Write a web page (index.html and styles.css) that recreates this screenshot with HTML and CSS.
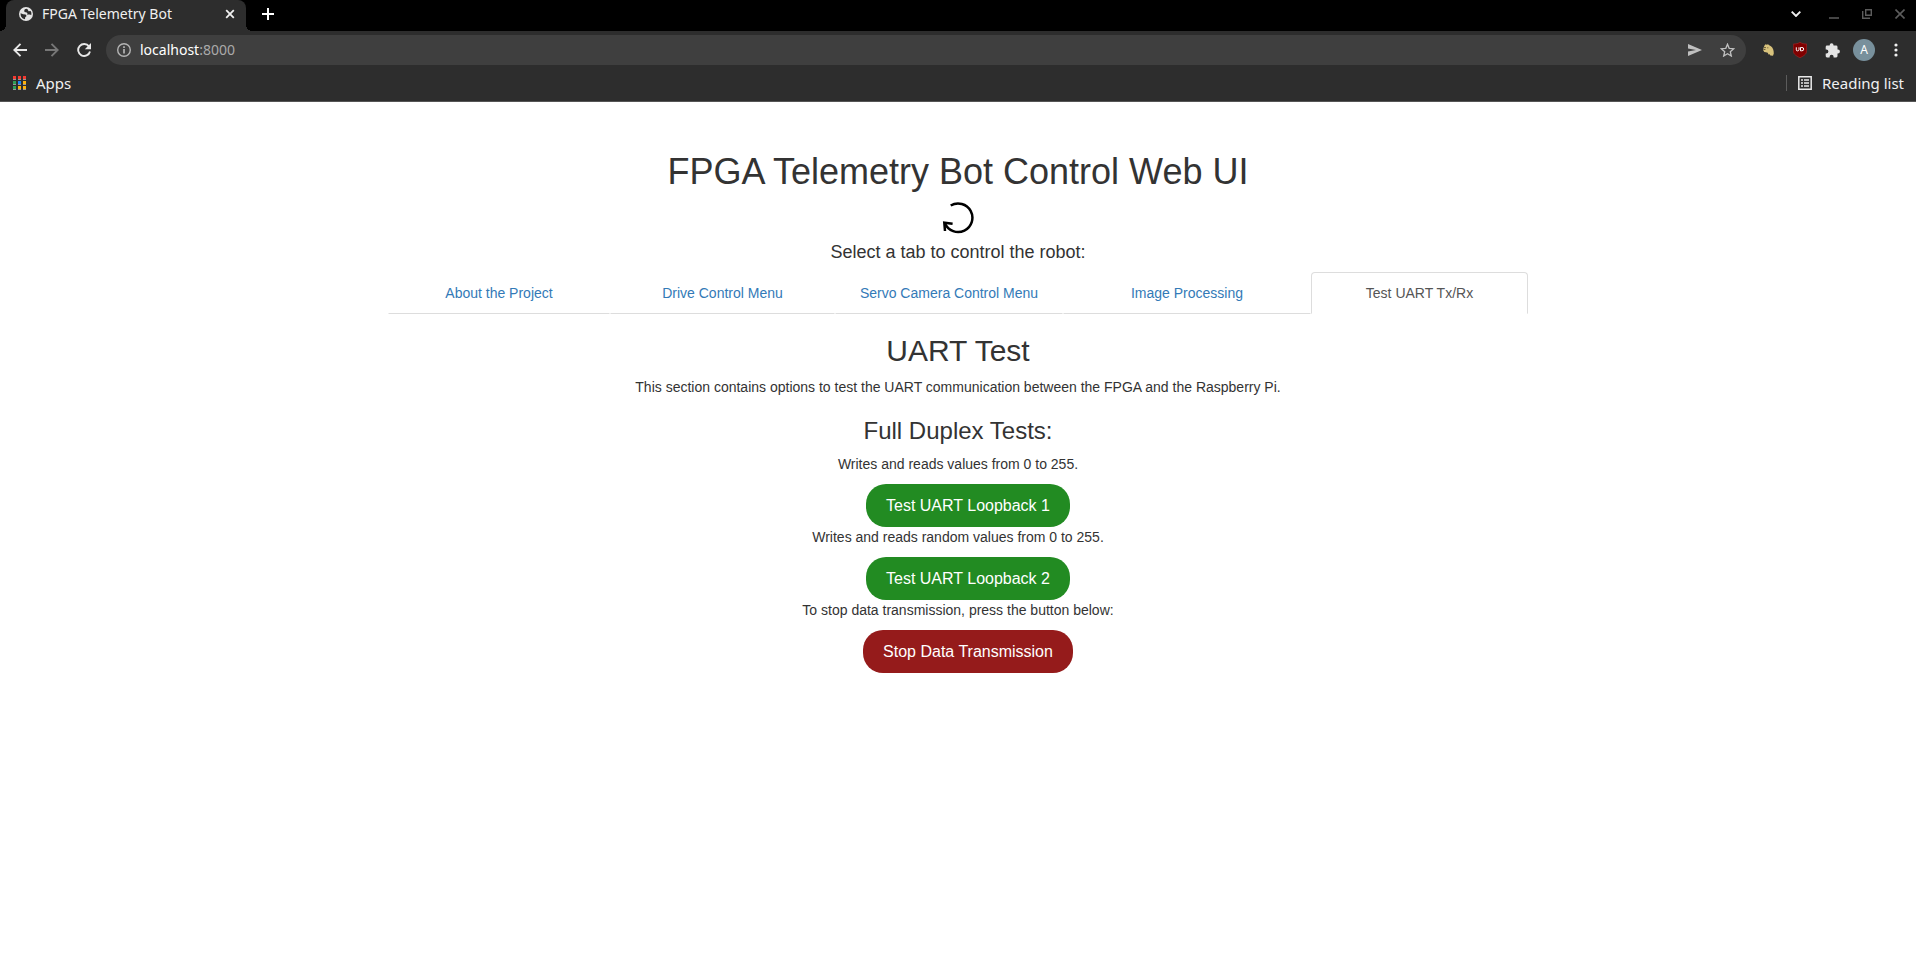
FILE: index.html
```html
<!DOCTYPE html>
<html lang="en">
<head>
<meta charset="utf-8">
<title>FPGA Telemetry Bot</title>
<link rel="stylesheet" href="styles.css">
</head>
<body>
<header class="browser">
  <div class="tabstrip">
    <div class="browser-tab">
      <svg width="14" height="14" viewBox="0 0 14 14" aria-hidden="true"><circle cx="7" cy="7" r="7" fill="#e4e4e4"/><path d="M7.600 1.800Q5.200 2 5.200 3.800T7.200 5.300L8.600 6.200 7.800 7.600H10.500L12.300 8Q12.900 5.500 11.600 4L9.500 4.300 8.800 2.600zM1.600 6.200L4.200 7.200 6.600 7.400 7.600 8.900 6.200 10.300 6 12.300Q3.500 12 2.200 9.800 1.400 8 1.600 6.200z" fill="#2d2d2d"/></svg>
      <span class="tab-title">FPGA Telemetry Bot</span>
      <button class="icon-btn" aria-label="Close tab"><svg width="10" height="10" viewBox="0 0 10 10"><path d="M1.200 1.200l7.600 7.600M8.800 1.200L1.200 8.800" stroke="#f0f0f0" stroke-width="1.800"/></svg></button>
    </div>
    <button class="icon-btn new-tab" aria-label="New tab"><svg width="12" height="12" viewBox="0 0 12 12"><path d="M6 0v12M0 6h12" stroke="#fff" stroke-width="2"/></svg></button>
    <div class="window-controls">
      <button class="icon-btn" aria-label="Search tabs"><svg width="10" height="6" viewBox="0 0 10 6"><path d="M.7.7L5 5 9.300.7" fill="none" stroke="#f0f0f0" stroke-width="1.900"/></svg></button>
      <button class="icon-btn" aria-label="Minimize"><svg width="10" height="10" viewBox="0 0 10 10"><path d="M0 9h10" stroke="#5c5c5c" stroke-width="1.500"/></svg></button>
      <button class="icon-btn" aria-label="Restore"><svg width="10" height="10" viewBox="0 0 10 10"><path d="M3.700.7h5.600v5.600H3.700zM.7 2v7.300H8" fill="none" stroke="#5c5c5c" stroke-width="1.400"/></svg></button>
      <button class="icon-btn" aria-label="Close"><svg width="10" height="10" viewBox="0 0 10 10"><path d="M.5.5l9 9M9.500.5l-9 9" stroke="#5c5c5c" stroke-width="1.600"/></svg></button>
    </div>
  </div>
  <div class="toolbar">
    <div class="nav-buttons">
      <button class="icon-btn" aria-label="Back"><svg width="14" height="14" viewBox="0 0 14 14"><path d="M14 7H1.500M7.500.8L1.300 7l6.200 6.200" fill="none" stroke="#e8e8e8" stroke-width="1.900"/></svg></button>
      <button class="icon-btn" aria-label="Forward"><svg width="14" height="14" viewBox="0 0 14 14"><path d="M0 7h12.500M6.500.8L12.700 7l-6.200 6.200" fill="none" stroke="#777" stroke-width="1.900"/></svg></button>
      <button class="icon-btn" aria-label="Reload"><svg width="14" height="14" viewBox="0 0 14 14"><path d="M12 3.400A6 6 0 1 0 13 8.500" fill="none" stroke="#e8e8e8" stroke-width="1.900"/><path d="M14 0v6.200H7.800z" fill="#e8e8e8"/></svg></button>
    </div>
    <div class="omnibox">
      <svg width="14" height="14" viewBox="0 0 14 14" aria-hidden="true"><circle cx="7" cy="7" r="6.300" fill="none" stroke="#b4b4b4" stroke-width="1.400"/><path d="M7 6v4.500M7 3.300V5" stroke="#b4b4b4" stroke-width="1.700"/></svg>
      <div class="url" role="textbox" aria-label="Address bar" contenteditable="true">localhost<span class="port">:8000</span></div>
      <button class="icon-btn" aria-label="Share"><svg width="14" height="12" viewBox="0 0 14 12"><path d="M0 0l14 6L0 12V7.500L8 6 0 4.500z" fill="#c0c0c0"/></svg></button>
      <button class="icon-btn" aria-label="Bookmark"><svg width="15" height="14" viewBox="0 0 15 14"><path d="M7.500 1.200l1.700 4.100 4.500.4-3.400 3 1 4.300-3.800-2.300L3.700 13l1-4.300-3.400-3 4.500-.4z" fill="none" stroke="#c0c0c0" stroke-width="1.300"/></svg></button>
    </div>
    <div class="extensions">
      <button class="icon-btn" aria-label="Extension"><svg width="11" height="12" viewBox="0 0 11 12"><path d="M1.500 1.500L2.500.3l1.300.5L5 .2l1.200 1C8.800 2 10.300 4.500 10.600 7l.2 2.500-.8 2.300-2.600-.2-.8-1.400-1.100.3-.8-1.700L2.900 8.200 1.300 8 .2 6.200.5 4z" fill="#d8c27c"/><path d="M1 3.600h2M.6 5.500h1.800M4.800 3.300v1" stroke="#4b4127" stroke-width=".8"/></svg></button>
      <button class="icon-btn" aria-label="Ad blocker"><svg width="14" height="16" viewBox="0 0 14 16"><path d="M7 .3C9 1.600 11 2 13.700 2v7c0 3.300-3.700 5.300-6.700 6.700C4 14.300.3 12.300.3 9V2C3 2 5 1.600 7 .3z" fill="#800000" stroke="#a22a2a" stroke-width=".6"/><path d="M3.300 5.300v2.600q0 1 1.200 1t1.500-1V5.300M7.500 5.500v3.300h1.400q1.800 0 1.800-1.700T8.900 5.500z" fill="none" stroke="#fff" stroke-width="1"/></svg></button>
      <button class="icon-btn" aria-label="Extensions"><svg width="15" height="15" viewBox="0 0 15 15"><path d="M4.700 2.600v-.5a1.900 1.900 0 0 1 3.800 0v.5h2.700q1.300 0 1.300 1.300v2.700h.5a1.900 1.900 0 0 1 0 3.800h-.5v2.700q0 1.300-1.300 1.300H8.600v-.7a2 2 0 0 0-4 0v.7H2q-1.300 0-1.300-1.300v-2.600h.7a2 2 0 0 0 0-4H.7V3.900Q.7 2.600 2 2.600z" fill="#e4e4e4"/></svg></button>
      <button class="icon-btn" aria-label="Profile"><span class="avatar">A</span></button>
      <button class="icon-btn" aria-label="Menu"><svg width="4" height="14" viewBox="0 0 4 14" fill="#f0f0f0"><circle cx="2" cy="2" r="1.600"/><circle cx="2" cy="7" r="1.600"/><circle cx="2" cy="12" r="1.600"/></svg></button>
    </div>
  </div>
  <div class="bookmarks">
    <button class="bookmark"><svg width="13" height="14" viewBox="0 0 13 14" aria-hidden="true"><path d="M0 1h3v3H0zM5 1h3v3H5zM10 1h3v3h-3zM0 6h3v3H0zM5 6h3v3H5zM10 6h3v3h-3zM0 11h3v3H0zM5 11h3v3H5zM10 11h3v3h-3z" fill="#999"/><path d="M0 0h3v3H0zM5 0h3v3H5zM10 0h3v3h-3z" fill="#f33a30"/><path d="M0 5h3v3H0zM0 10h3v3H0z" fill="#2f9e55"/><path d="M5 5h3v3H5z" fill="#1c84f5"/><path d="M10 5h3v3h-3zM5 10h3v3H5zM10 10h3v3h-3z" fill="#fcb00c"/></svg>Apps</button>
    <button class="bookmark reading-list"><svg width="14" height="14" viewBox="0 0 14 14" aria-hidden="true"><path d="M.8.8h12.400v12.400H.8z" fill="none" stroke="#e8e8e8" stroke-width="1.500"/><path d="M3 4h2M6 4h5M3 7h2M6 7h5M3 10h2M6 10h5" stroke="#e8e8e8" stroke-width="1.500"/></svg>Reading list</button>
  </div>
</header>

<main class="container">
  <h1>FPGA Telemetry Bot Control Web UI</h1>
  <svg class="rotate" width="32" height="32" viewBox="0 0 32 32" fill="none" stroke="#000" stroke-width="2.500" aria-hidden="true"><path d="M8.700 3.500A14.300 14.300 0 1 1 3 21.500"/><path d="M10.600 21.800L2.300 20.700 3 29"/></svg>
  <h4>Select a tab to control the robot:</h4>
  <nav class="tabs">
    <a href="#about">About the Project</a>
    <a href="#drive">Drive Control Menu</a>
    <a href="#servo">Servo Camera Control Menu</a>
    <a href="#image">Image Processing</a>
    <a href="#uart" class="active" aria-current="page">Test UART Tx/Rx</a>
  </nav>
  <section class="panel">
    <h2>UART Test</h2>
    <p>This section contains options to test the UART communication between the FPGA and the Raspberry Pi.</p>
    <h3>Full Duplex Tests:</h3>
    <p>Writes and reads values from 0 to 255.</p>
    <button class="action">Test UART Loopback 1</button>
    <p>Writes and reads random values from 0 to 255.</p>
    <button class="action">Test UART Loopback 2</button>
    <p>To stop data transmission, press the button below:</p>
    <button class="action stop">Stop Data Transmission</button>
  </section>
</main>
</body>
</html>
```
FILE: styles.css
```css
* { box-sizing: border-box; }

body {
  margin: 0;
  background: #fff;
  color: #333;
  font: 14px/20px "Liberation Sans", Arial, sans-serif;
}

button {
  margin: 0;
  padding: 0;
  border: 0;
  background: none;
  color: inherit;
  font: inherit;
  cursor: pointer;
}

svg { display: block; flex: none; }

/* Browser frame */
.browser {
  background: #2d2d2d;
  border-bottom: 1px solid #555;
  color: #f0f0f0;
  font: 15px/20px "Noto Sans", "Open Sans", sans-serif;
}

.icon-btn { display: flex; align-items: center; justify-content: center; flex: none; }

.tabstrip {
  display: flex;
  align-items: center;
  height: 31px;
  padding: 0 11px 0 6px;
  background: #000;
}

.browser-tab {
  position: relative;
  display: flex;
  align-items: center;
  width: 240px;
  height: 31px;
  padding: 0 11px 3px 13px;
  gap: 9px;
  background: #2d2d2d;
  border-radius: 8px 8px 0 0;
}

.browser-tab::before,
.browser-tab::after {
  content: "";
  position: absolute;
  bottom: 0;
  width: 6px;
  height: 6px;
}

.browser-tab::before { right: 100%; background: radial-gradient(circle at 0 0, #000 6px, #2d2d2d 6px); }
.browser-tab::after { left: 100%; background: radial-gradient(circle at 100% 0, #000 6px, #2d2d2d 6px); }

.tab-title { flex: 1; font-size: 14px; white-space: nowrap; }
.new-tab { margin-left: 16px; padding-bottom: 3px; }

.window-controls {
  display: flex;
  align-items: center;
  gap: 23px;
  margin-left: auto;
  padding-bottom: 3px;
}

.window-controls .icon-btn:first-child { margin-right: 5px; }

.toolbar {
  display: flex;
  align-items: center;
  height: 38px;
  padding: 0 4px 0 13px;
}

.nav-buttons { display: flex; gap: 18px; margin-right: 15px; }

.omnibox {
  display: flex;
  flex: 1;
  align-items: center;
  height: 30px;
  padding: 0 11px;
  border-radius: 15px;
  background: #3f3f3f;
}

.url { flex: 1; margin-left: 9px; color: #fff; font-size: 14px; outline: 0; }
.port { color: #aaa; }
.omnibox .icon-btn { margin-left: 18px; }

.extensions { display: flex; align-items: center; margin-left: 6px; }
.extensions .icon-btn { width: 32px; height: 30px; }

.avatar {
  width: 22px;
  height: 22px;
  border-radius: 50%;
  background: #78909c;
  color: #fff;
  font-size: 12px;
  line-height: 22px;
}

.bookmarks {
  display: flex;
  align-items: center;
  justify-content: space-between;
  height: 32px;
  padding: 0 12px 4px 13px;
}

.bookmark { display: flex; align-items: center; gap: 10px; height: 16px; white-space: nowrap; }
.reading-list { padding-left: 11px; border-left: 1px solid #5c5c5c; }

/* Page */
.container {
  max-width: 1170px;
  margin: 0 auto;
  padding: 50px 15px;
  text-align: center;
}

h1, h2, h3, h4 { margin: 0 0 10px; font-weight: 400; }
h1 { font-size: 36px; line-height: 40px; }
h2 { font-size: 30px; line-height: 33px; }
h3 { margin-top: 10px; font-size: 24px; line-height: 27px; }
h4 { font-size: 18px; line-height: 20px; }
p { margin: 0 0 10px; }

.rotate { margin: 0 auto 8px; }

.tabs {
  display: grid;
  grid-template-columns: 222fr 225fr 228fr 248fr 217fr;
}

.tabs a {
  padding: 10px 15px;
  border: 1px solid transparent;
  border-bottom-color: #ddd;
  border-radius: 4px 4px 0 0;
  color: #337ab7;
  text-decoration: none;
}

.tabs .active { border-color: #ddd #ddd #fff; color: #555; }

.panel {
  display: flex;
  flex-direction: column;
  align-items: center;
  padding-top: 20px;
}

.action {
  margin-left: 20px;
  padding: 10px 20px;
  border-radius: 20px;
  background: #228b22;
  color: #fff;
  font-size: 16px;
  line-height: 23px;
}

.stop { background: #951b1b; }
```
